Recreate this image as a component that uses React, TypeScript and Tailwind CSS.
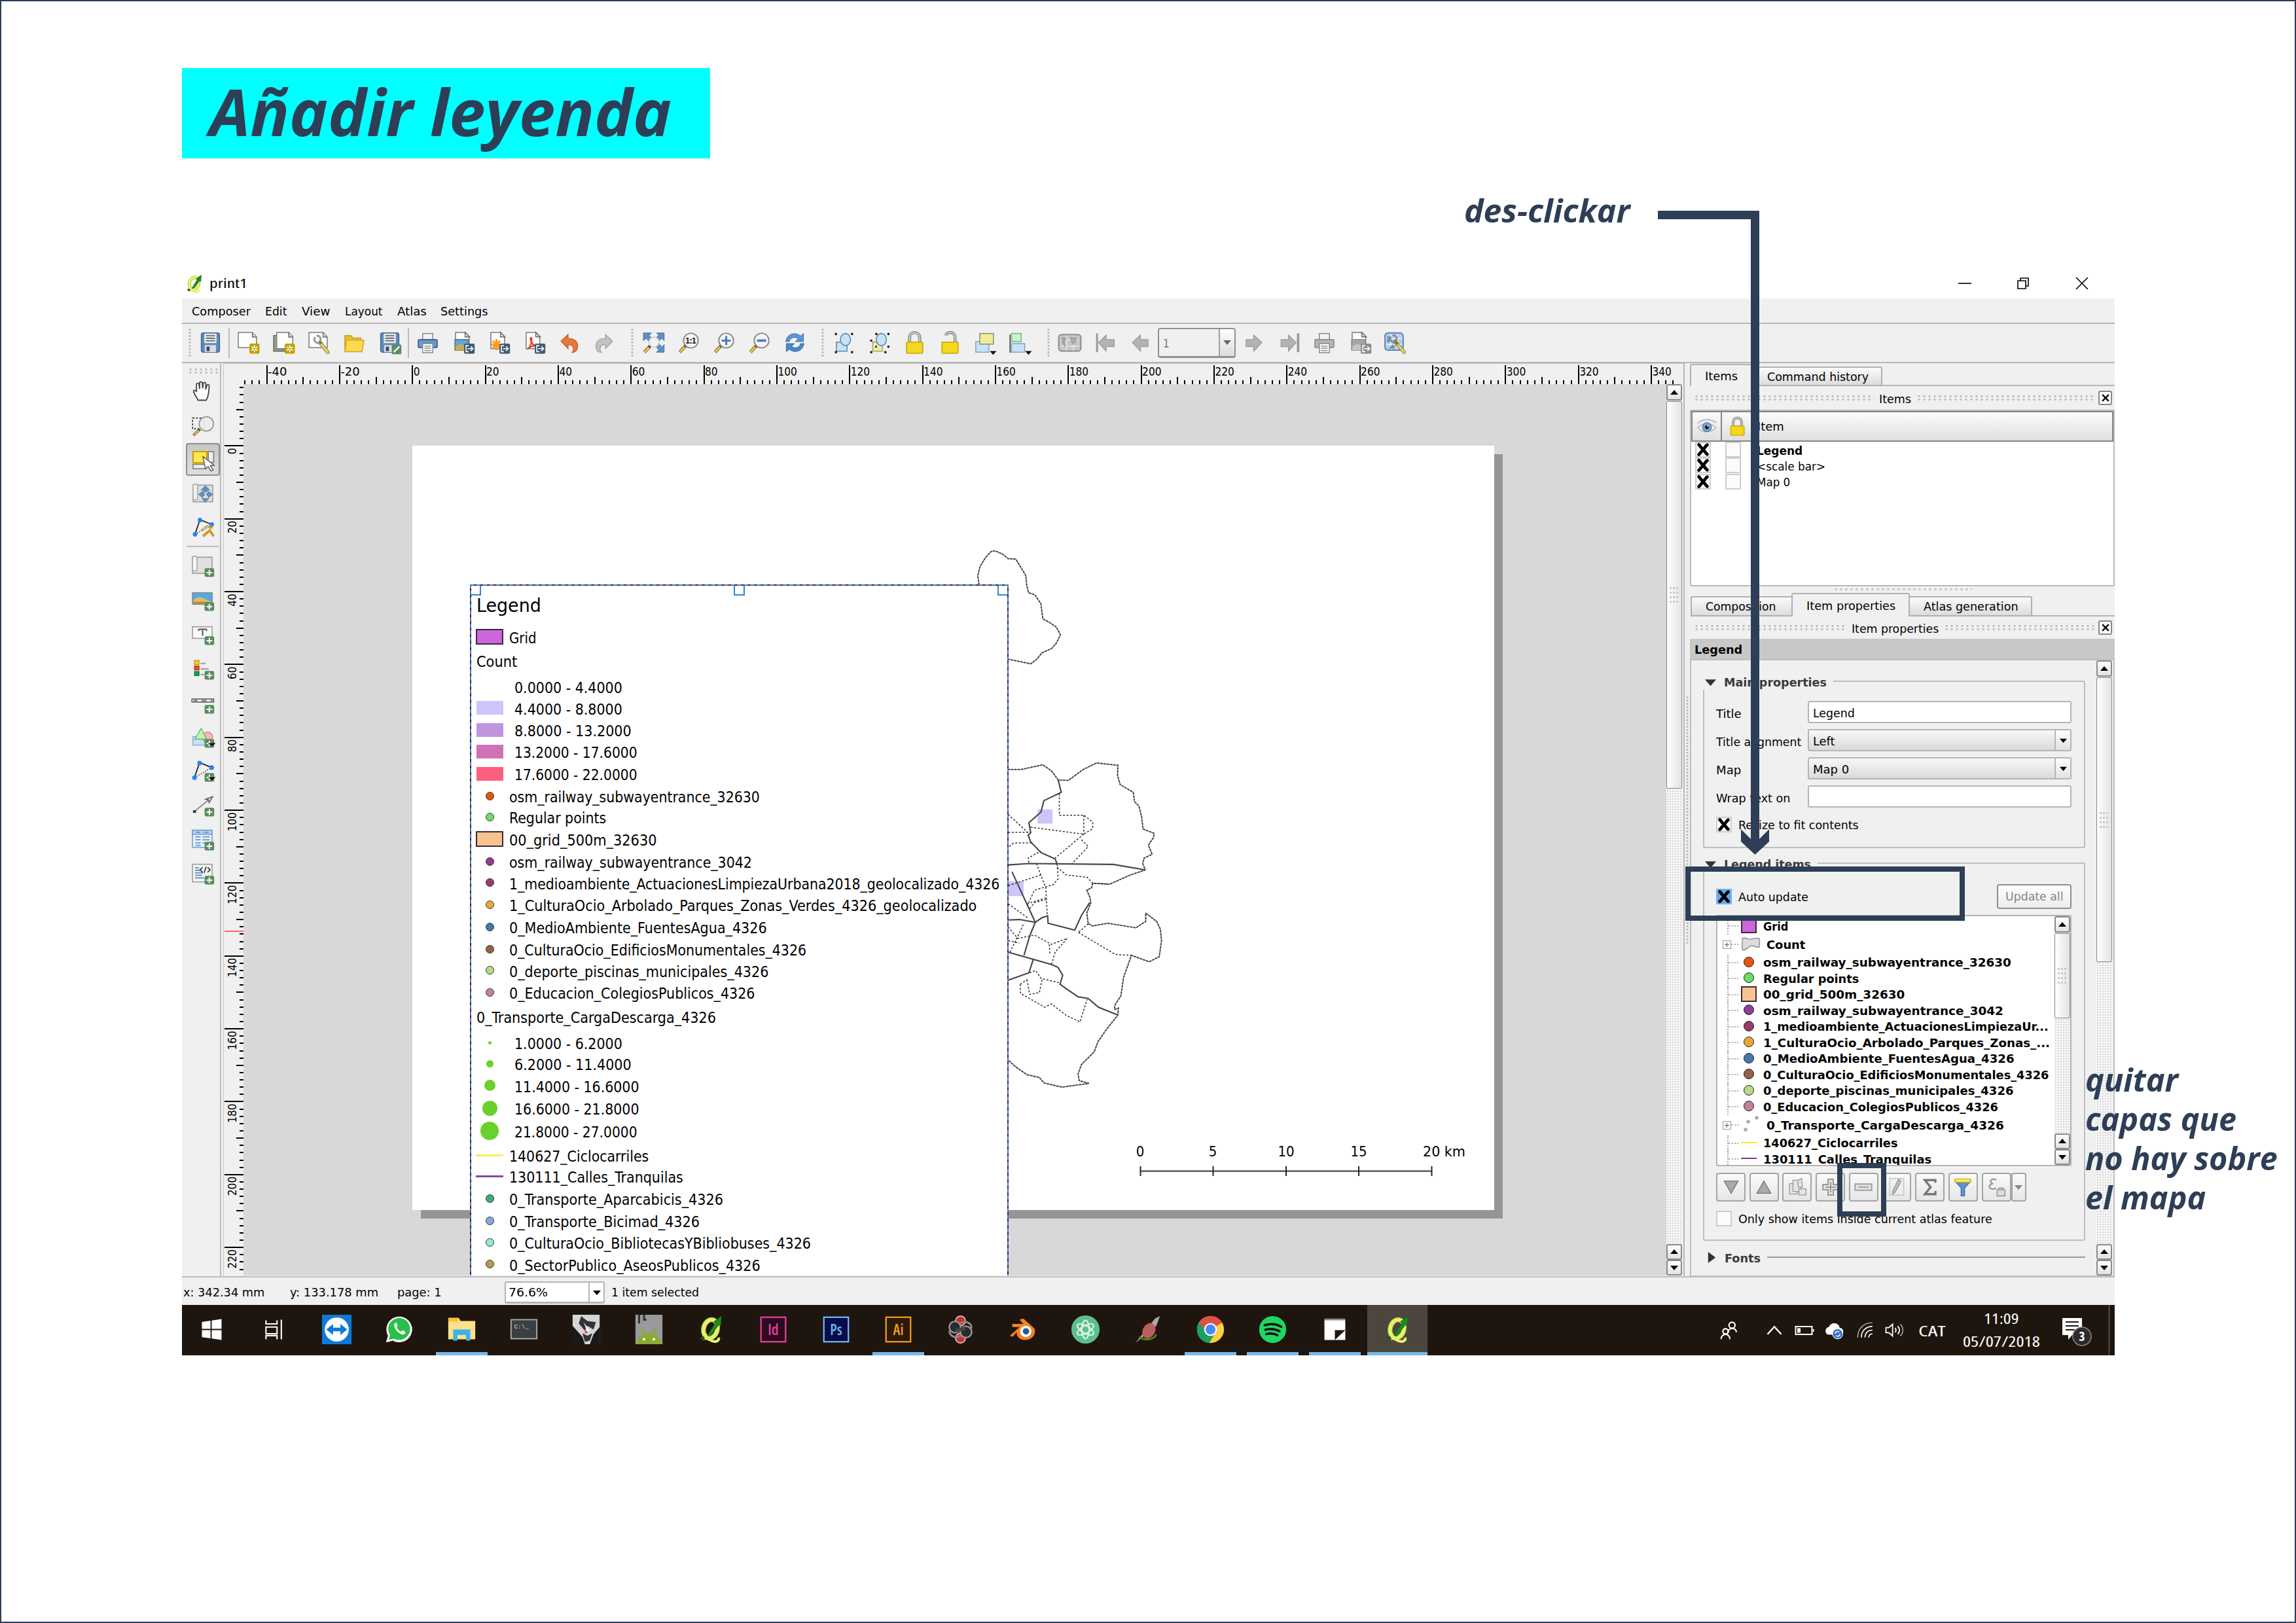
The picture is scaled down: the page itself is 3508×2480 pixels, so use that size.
import React, { useLayoutEffect, useRef } from "react";

const UI = "font-['DejaVu_Sans_Condensed','DejaVu_Sans',sans-serif] [font-stretch:condensed]";

/* Text squeezed or stretched to an exact advance width. */
function Fit({ w, children, className = "" }: { w: number; children: React.ReactNode; className?: string }) {
  const ref = useRef<HTMLSpanElement>(null);
  useLayoutEffect(() => {
    const el = ref.current;
    if (el && el.offsetWidth) el.style.transform = `scaleX(${w / el.offsetWidth})`;
  }, [w, children]);
  return (
    <span className={`inline-block shrink-0 whitespace-nowrap ${className}`} style={{ width: w }}>
      <span ref={ref} className="inline-block origin-left whitespace-nowrap">{children}</span>
    </span>
  );
}

/* ---------- icon parts ---------- */
const PlusBadge = () => (
  <g><rect x="14" y="14.5" width="9.5" height="8.5" rx="1.5" fill="#5b8c5f" /><path d="M18.75 16v5.6M15.9 18.8h5.7" stroke="#fff" strokeWidth="1.4" /></g>
);
const StarBadge = () => (
  <g><rect x="13" y="13" width="10" height="10" rx="1.5" fill="#c4a000" /><path d="M18 14.5v7M15 16.2l6 3.6M21 16.2l-6 3.6" stroke="#fff" strokeWidth="1.1" /><circle cx="18" cy="18" r="1" fill="#c4a000" /></g>
);
const ExportBadge = ({ c = "#415a73" }: { c?: string }) => (
  <g><rect x="13" y="13" width="10.5" height="10" rx="1.5" fill={c} /><path d="M17.5 15h-2.5v6h2.5M16.5 18h5M19.6 15.8l2.2 2.2-2.2 2.2" stroke="#fff" strokeWidth="1" fill="none" /></g>
);
const Sheet = () => <path d="M4.500 2h9.500l4 4v12H4.500z" fill="#fff" stroke="#7b7b7b" />;
const Fold = () => <path d="M14 1.800v4.500h4.500z" fill="#ddd" stroke="#666" strokeWidth=".9" />;
const Floppy = () => (
  <g>
    <rect x="3" y="2.500" width="18" height="19" rx="1.800" fill="#5f8bbd" stroke="#44658f" />
    <rect x="6" y="3" width="12" height="9.500" fill="#ececec" /><path d="M7.500 5.200h9M7.500 7.700h9M7.500 10.200h9" stroke="#555" strokeWidth="1" />
    <rect x="6.500" y="14.500" width="11" height="7" fill="#ddd" /><rect x="8.200" y="16" width="3" height="4.500" fill="#2c4b78" />
  </g>
);
const Lens = ({ children }: { children?: React.ReactNode }) => (
  <g>
    <path d="M9 15l-6 6.500" stroke="#333" strokeWidth="3" /><path d="M8 16.200l-5 5.300" stroke="#f6c33c" strokeWidth="2.200" />
    <circle cx="14" cy="10" r="7.300" fill="#f4f4f4" stroke="#8a8a8a" strokeWidth="1.200" />{children}
  </g>
);
const Printer = ({ a, b }: { a: string; b: string }) => (
  <g>
    <rect x="7" y="3" width="10" height="7" fill="#f2f2f2" stroke="#8c8c8c" /><rect x="2.500" y="9" width="19" height="8" rx="1.500" fill={a} stroke={b} />
    <rect x="7" y="13" width="10" height="9" fill="#fff" stroke="#8c8c8c" /><path d="M8.700 15.500h6.500M8.700 17.700h6.500M8.700 19.900h6.500" stroke="#888" />
  </g>
);
const Lock = ({ open }: { open?: boolean }) => (
  <g>
    <path d={open ? "M8 5c1-4.500 9-4 9 1.500V12" : "M7 12V7c0-6.500 10-6.500 10 0v5"} fill="none" stroke="#888" strokeWidth="3" />
    <path d={open ? "M8 5c1-4.500 9-4 9 1.500V12" : "M7 12V7c0-6.500 10-6.500 10 0v5"} fill="none" stroke="#ddd" strokeWidth="1" />
    <rect x="4" y="11.500" width="16" height="11" rx="1" fill="#f2d81e" stroke="#c9a200" />
  </g>
);
const PolyNodes = () => (
  <g>
    <path d="M4 19L9 4l12 5" fill="none" stroke="#222" strokeWidth="1.200" /><path d="M4 19L21 9" stroke="#333" strokeWidth=".8" strokeDasharray="1.200 1.200" />
    <circle cx="4" cy="19" r="2.300" fill="#2a7fff" /><circle cx="9" cy="4.500" r="2.300" fill="#2a7fff" /><circle cx="21" cy="9" r="2.300" fill="#2a7fff" />
  </g>
);
/* QGIS mark: a yellow ring with a tail, crossed by a green arrow. */
const Q = () => (
  <g>
    <ellipse cx="11.500" cy="11.500" rx="5.600" ry="7.600" transform="rotate(14 11.500 11.500)" fill="none" stroke="#9fae3a" strokeWidth="4" />
    <ellipse cx="11.500" cy="11.500" rx="5.600" ry="7.600" transform="rotate(14 11.500 11.500)" fill="none" stroke="#e6f26a" strokeWidth="3" />
    <path d="M6.500 19.500c3-2 5 3.200 9.500 2.200 1.300-.3 2-1.200 2.300-2.200" fill="none" stroke="#e6f26a" strokeWidth="2.200" strokeLinecap="round" />
    <path d="M9 17L15.500 6.500l-1.500-.7L20.500 1l-.7 8-1.500-.8L11 17.500z" fill="#1d8a1d" stroke="#0c5a0c" strokeWidth=".4" />
    <path d="M3 18.500l3-1 1 2.500-2 1z" fill="#1d5a1d" />
  </g>
);

const ICONS: Record<string, React.ReactNode> = {
  save: <Floppy />,
  newdoc: <><path d="M2 2h14l4 4v11H2z" fill="#fff" stroke="#7b7b7b" /><path d="M16 2v4.500h4" fill="#ddd" stroke="#666" /><StarBadge /></>,
  dup: <><path d="M2 5h4v13h11v2.500H2z" fill="#9b9b8d" stroke="#6d6d63" /><path d="M5 2h12l4 4v12H5z" fill="#fff" stroke="#7b7b7b" /><path d="M17 2v4.500h4" fill="#ddd" stroke="#666" /><StarBadge /></>,
  wrench: <><path d="M2 2h14l4 4v11H2z" fill="#fff" stroke="#7b7b7b" /><path d="M16 2v4.500h4" fill="#ddd" stroke="#666" /><path d="M13 12l7.500 9.500" stroke="#8a7430" strokeWidth="3.600" strokeLinecap="round" /><path d="M14.500 14l6 7.500" stroke="#e9cf6f" strokeWidth="2.400" strokeLinecap="round" /><path d="M8 6.500c-2 3 1 7 4.500 5.500M9.500 5.500c3-1 5 2 3.500 5" stroke="#999" strokeWidth="2" fill="none" /></>,
  folder: <><path d="M2.500 5h6l2 2.500h8V20h-16z" fill="#e3bd35" stroke="#c9a227" /><path d="M4.500 9.500h17l-2 11.500h-17z" fill="#fcd94f" stroke="#d3ab2c" /></>,
  saveas: <><Floppy /><rect x="14" y="14" width="9.500" height="9.500" rx="1" fill="#5b8c5f" /><path d="M16 21.500l5.500-5.500" stroke="#fff" strokeWidth="1.600" /></>,
  print: <Printer a="#6b96c7" b="#3d6491" />,
  image: <><Sheet /><Fold /><rect x="4" y="9" width="13.500" height="10.500" fill="#58a7e8" stroke="#6b6b6b" /><path d="M4.500 16l5-3 8 4v2.500h-13z" fill="#c9ae4c" /><ExportBadge /></>,
  svgexp: <><Sheet /><Fold /><path d="M10 8.500v11M4.800 14h10.500M6.200 10.200l7.600 7.600M13.800 10.200l-7.600 7.600" stroke="#ff9a1f" strokeWidth="2" /><ExportBadge /></>,
  pdf: <><Sheet /><Fold /><path d="M5.500 18.500c3-2 5-7 4.500-10.500-.2-1.500-1.800-1-1.300 1 .8 3.500 3 6 6.800 6.500-3-1-7 .5-10 3z" fill="none" stroke="#ee3a30" strokeWidth="1.400" /><ExportBadge /></>,
  undo: <path d="M4 10.500L11 4v4c6-.5 9.500 3 9.500 7.500 0 3.500-2 6-5.500 6.500 2.500-4 1.500-8-4-8v4z" fill="#e8783a" stroke="#c25a22" strokeWidth=".8" />,
  redo: <path d="M20 10.500L13 4v4c-6-.5-9.500 3-9.500 7.500 0 3.500 2 6 5.500 6.500-2.500-4-1.500-8 4-8v4z" fill="#c2c2c2" stroke="#9f9f9f" strokeWidth=".8" />,
  zfull: <><path d="M2 2.500h8l-2.300 2.300 2.500 2.900-3 2.700-2.500-2.700L2 10zM22.500 2.500V10l-2.300-2.300-2.900 2.500-2.700-3 2.700-2.500-2.200-2.200zM22.500 21.500H15l2.300-2.300-2.500-2.900 3-2.700 2.500 2.700 2.200-2.300z" fill="#5f8fc6" stroke="#3c659b" strokeWidth=".6" /><path d="M8.500 15.500L3 21.500" stroke="#333" strokeWidth="3" /><path d="M7.500 16.700L3 21.500" stroke="#f6c33c" strokeWidth="2.200" /><circle cx="12.500" cy="11.500" r="5" fill="#f4f4f4" fillOpacity=".8" stroke="#ccc" /></>,
  z11: <Lens><text x="14" y="13" textAnchor="middle" fontFamily="DejaVu Sans" fontWeight="bold" fontSize="7.500" fill="#222" textLength="11">1:1</text></Lens>,
  zin: <Lens><path d="M14 5.500v9M9.500 10h9" stroke="#4b7dbb" strokeWidth="2" /></Lens>,
  zout: <Lens><path d="M9.500 10h9" stroke="#4b7dbb" strokeWidth="2.400" /></Lens>,
  refresh: <><path d="M3 11C4 3 13 1 17.500 5.500L20.500 3v8h-8l2.700-2.700C12.500 5.800 7.500 6.500 6.500 11z" fill="#5b95d6" stroke="#3469a6" strokeWidth=".6" /><path d="M21 13c-1 8-10 10-14.500 5.500L3.500 21v-8h8l-2.700 2.700C11.500 18.200 16.500 17.500 17.500 13z" fill="#4a86ca" stroke="#3469a6" strokeWidth=".6" /></>,
  sel: <><rect x="4.500" y="11.500" width="10.500" height="9" fill="#c7e3f8" stroke="#5b87ab" /><ellipse cx="13.500" cy="9" rx="5" ry="6" fill="#c7e3f8" stroke="#5b87ab" /><path d="M3 2.500h2v2H3zM19 2.500h2v2h-2zM3 20.500h2v2H3zM19 20.500h2v2h-2z" fill="#111" /></>,
  group: <><rect x="5.500" y="11.500" width="9.500" height="9" fill="#f0ee9c" stroke="#a8a667" /><ellipse cx="14" cy="9" rx="5" ry="6" fill="#c7e3f8" stroke="#5b87ab" /><path d="M8 2.500h2v2H8zM20 2.500h2v2h-2zM3 9h2v2H3zM20 15h2v2h-2zM3 20.500h2v2H3zM17 20.500h2v2h-2zM8 15h1.500v2H8z" fill="#111" /></>,
  lock: <Lock />,
  unlock: <Lock open />,
  raise: <><rect x="2.500" y="11" width="13" height="10.500" fill="#c7e3f8" stroke="#7fa6c4" /><rect x="6.500" y="3" width="13.500" height="10.500" fill="#f0ee9c" stroke="#8d8d6c" /><path d="M16.500 20.500h6.500l-3.300 3.500z" fill="#000" /></>,
  align: <><path d="M1.500 4v18" stroke="#333" /><rect x="3" y="3" width="9.500" height="8" fill="#c9f7cb" stroke="#7cb57f" /><rect x="3" y="13" width="13" height="8.500" fill="#c7e3f8" stroke="#7fa6c4" /><path d="M16.500 20.500h6.500l-3.300 3.500z" fill="#000" /></>,
  atlas: <><rect x="1" y="4" width="22" height="16.500" rx="3" fill="#c6c6c6" stroke="#8d8d8d" strokeWidth="1.300" /><path d="M3 9.500h18M3 15.500h18M8.500 5v15M15.500 5v15" stroke="#ececec" /><path d="M4 7c3-2 6 1 4 3s1 4 0 6-3-3-4-5zM12 7c3-2 6 0 7 1s-2 4-3 6-3-3-4-7z" fill="#8b8b8b" fillOpacity=".6" /></>,
  first: <><path d="M4 3v18.500" stroke="#999" strokeWidth="2" /><path d="M5.500 12L13 4.500V9h8v7h-8v4.500z" fill="#b3b3b3" stroke="#989898" strokeWidth=".8" /></>,
  prev: <path d="M4 12l8-7.500V9h7.500v7H12v4.500z" fill="#b3b3b3" stroke="#989898" strokeWidth=".8" />,
  next: <path d="M20 12l-8-7.500V9H4.500v7H12v4.500z" fill="#b3b3b3" stroke="#989898" strokeWidth=".8" />,
  last: <><path d="M21 3v18.500" stroke="#999" strokeWidth="2.400" /><path d="M19 12l-7.500-7.500V9H4v7h7.500v4.500z" fill="#b3b3b3" stroke="#989898" strokeWidth=".8" /></>,
  gprint: <Printer a="#b5b5b5" b="#8c8c8c" />,
  gexport: <><Sheet /><Fold /><rect x="4" y="9" width="13.500" height="10.500" fill="#a5a5a5" stroke="#8b8b8b" /><path d="M4.500 16l5-3 8 4v2.500h-13z" fill="#c4c4c4" /><ExportBadge c="#8d8d8d" /></>,
  gset: <><rect x="2" y="2.500" width="18" height="17" rx="3" fill="#b4cdea" stroke="#5f83b3" strokeWidth="1.300" /><path d="M3 8h16M3 14h16M8 3.500v15M14 3.500v15" stroke="#edf4fb" /><path d="M4 6c3-1 4 1 3 4s-2 3-3 1zM9 14c2 0 4 2 2 4H6z" fill="#6f93c2" /><path d="M12 11l9 10.500" stroke="#8a7430" strokeWidth="3.400" strokeLinecap="round" /><path d="M15 14.500l6 7" stroke="#e9cf6f" strokeWidth="2.200" strokeLinecap="round" /><path d="M8 6c-2 3 1 7 4.500 5.500M9.500 5c3-1 5 2 3.500 5" stroke="#8a8a8a" strokeWidth="1.800" fill="none" /></>,
  hand: <path d="M7 21c-1-3-4-6-4.500-9 0-1.500 2-1.500 3 .5V5c0-1.600 2.300-1.600 2.600 0l.6 4.500V3.500c0-1.600 2.500-1.600 2.700 0l.4 5.500.6-5c.2-1.500 2.500-1.500 2.500.2V10l1.200-4c.4-1.400 2.500-1 2.300.6-.4 5-.2 10-3 14.400z" fill="#fff" stroke="#444" strokeWidth="1.200" />,
  zbox: <><rect x="1.500" y="4.500" width="12" height="11" fill="none" stroke="#222" strokeDasharray="2 1.500" /><path d="M9 16l-6.500 6" stroke="#444" strokeWidth="2.800" /><path d="M8 17l-5 4.600" stroke="#f0b436" strokeWidth="2" /><circle cx="15.500" cy="10.500" r="7.300" fill="#ececec" fillOpacity=".9" stroke="#999" strokeWidth="1.200" /></>,
  select: <><rect x="2" y="4" width="14" height="11.500" fill="#fce94f" stroke="#c4a000" strokeWidth="1.300" /><path d="M17.500 4h5.500v11h-5.500zM2 17h13.500v4.500H2z" fill="#eee" stroke="#777" /><path d="M12 9l11.500 9-4 .5 3 4.500-2.500.8-2.500-4.500-3 2z" fill="#fff" stroke="#555" strokeWidth=".9" /></>,
  move: <><rect x="2" y="3.500" width="20" height="17" fill="#ddd" stroke="#999" /><rect x="2" y="2.500" width="4.500" height="16" rx="1.500" fill="#f0f0f0" stroke="#aaa" /><path d="M14.500 4l4.500 4.500h-2.700v2h-3.600v-2H10zM14.500 21l-3.500-3.800h7zM7.500 13l4.500-3.500v2.300h1.500v2.400H12v2.300zM22 13l-4.500-3.500v2.300H16v2.400h1.500v2.300z" fill="#5f8fc6" stroke="#3c659b" strokeWidth=".4" /></>,
  nodes: <><PolyNodes /><path d="M11 15l5-4 6 1M12 21l7-6 4 6" stroke="#d39a20" strokeWidth="2.600" fill="none" /><path d="M12 14l6-3" stroke="#bbb" strokeWidth="2.400" /></>,
  amap: <><rect x="2" y="3.500" width="19.500" height="16" fill="#e0e0e0" stroke="#999" /><rect x="2" y="2.500" width="4.500" height="14.500" rx="1.500" fill="#f6f6f6" stroke="#aaa" /><PlusBadge /></>,
  aimg: <><rect x="2" y="5" width="19.500" height="11.500" fill="#58a7e8" stroke="#888" /><path d="M3 12c5-5 8-2 18 2v2H3z" fill="#d8bd6a" /><path d="M3 14h18v2.300H3z" fill="#b1902c" /><PlusBadge /></>,
  alabel: <><rect x="2" y="5" width="19.500" height="11.500" fill="#f8f8f8" stroke="#999" /><path d="M8 7.500h8M12 7.500v6.500M8 7.500v1.500M16 7.500v1.500" stroke="#555" strokeWidth="1.300" /><PlusBadge /></>,
  alegend: <><rect x="4" y="4" width="4.500" height="4" fill="#ffd21e" stroke="#b78a00" strokeWidth=".7" /><rect x="4" y="9.500" width="4.500" height="4" fill="#ff4a16" stroke="#a52800" strokeWidth=".7" /><rect x="4" y="15" width="4.500" height="4" fill="#00a65a" stroke="#006a36" strokeWidth=".7" /><path d="M10 7h5M10 12.500h8M10 18h3.500" stroke="#999" strokeWidth="1.300" /><PlusBadge /></>,
  ascale: <><rect x="1.500" y="8.500" width="21.500" height="3" fill="#fff" stroke="#555" /><path d="M3 10h4M11 10h5M20 10h2" stroke="#999" strokeWidth="2" /><PlusBadge /></>,
  ashape: <><rect x="2.500" y="12" width="13" height="8.500" fill="#c7e3f8" stroke="#8ab0cd" /><ellipse cx="17" cy="13" rx="5" ry="5.500" fill="#ffb4b4" stroke="#d98a8a" /><path d="M10.500 4L16 14.500H4.500z" fill="#bff3bd" stroke="#78b878" /><PlusBadge /><path d="M17.500 18.500H25l-3.700 3z" fill="#000" /></>,
  anode: <><PolyNodes /><PlusBadge /><path d="M17.500 18.500H25l-3.700 3z" fill="#000" /></>,
  aarrow: <><path d="M4 18L20 5" stroke="#888" strokeWidth="1.200" /><rect x="2.500" y="17" width="3" height="2.500" fill="#333" /><path d="M15 6l7-2.500-3.500 6-.5-2.800z" fill="#ddd" stroke="#555" strokeWidth=".9" /><PlusBadge /></>,
  atable: <><rect x="2" y="3" width="19.500" height="17" fill="#e6f0fa" stroke="#6f9dce" /><rect x="2" y="3" width="19.500" height="4" fill="#b7d4ef" stroke="#6f9dce" /><path d="M5.500 5h4M13 5h5M5 9.500h5M12 9.500h7M5 12.500h5M12 12.500h7M5 15.500h5M12 15.500h3M5 18h5" stroke="#5b86b8" /><PlusBadge /></>,
  ahtml: <><rect x="2" y="3" width="19.500" height="17.500" fill="#f4f4f4" stroke="#999" /><path d="M4.500 6.500h4M4.500 9h5M4.500 11.500h8M4.500 14h7M4.500 16.500h9" stroke="#6b97cc" strokeWidth="1.300" /><path d="M12 6l-2.500 2.500L12 11M17 6l2.500 2.500L17 11M15.500 5.500l-2 6" stroke="#333" fill="none" strokeWidth="1.100" /><PlusBadge /></>,
};

function Icon({ n, s = "size-[37px]" }: { n: string; s?: string }) {
  return <svg viewBox="0 0 24 24" className={`${s} shrink-0 overflow-visible`}>{ICONS[n]}</svg>;
}

const TOOLBAR = [
  "h0", "save", "|", "newdoc", "dup", "wrench", "folder", "saveas", "|", "print", "image", "svgexp", "pdf", "undo", "redo",
  "h", "zfull", "z11", "zin", "zout", "refresh", "h", "sel", "group", "lock", "unlock", "raise", "align", "h", "atlas", "first", "prev",
  "combo", "next", "last", "gprint", "gexport", "gset",
];

const DOTS = "bg-[radial-gradient(circle,#bdbdbd_1.4px,transparent_1.9px)] bg-[length:8px_5px]";

function Toolbar() {
  return (
    <div className="flex h-[60px] items-center border-b-2 border-[#b6b6b6] bg-[#f0f0f0] pb-[1px]">
      {TOOLBAR.map((t, i) => {
        if (t === "h0") return <div key={i} className={`ml-[8px] h-[46px] w-[8px] ${DOTS}`} />;
        if (t === "h") return <div key={i} className={`ml-[12px] mr-[1px] h-[46px] w-[8px] ${DOTS}`} />;
        if (t === "|") return <div key={i} className="mx-[1px] h-[46px] w-[2px] bg-[#bbb]" />;
        if (t === "combo")
          return (
            <div key={i} className="flex h-[46px] w-[119px] overflow-hidden rounded-[4px] border-2 border-b-[3px] border-[#909090] bg-[#f0f0f0]">
              <div className="flex flex-1 items-center pl-[6px] pt-[4px] text-[17px] text-[#8a7070]">1</div>
              <div className="flex w-[24px] items-center justify-center border-l-2 border-[#a0a0a0] bg-linear-to-b from-white to-[#dcdcdc]">
                <Tri dir="down" c="#666" />
              </div>
            </div>
          );
        return <div key={i} className="flex w-[54px] shrink-0 justify-center"><Icon n={t} /></div>;
      })}
    </div>
  );
}

function Tri({ dir, c = "#000", s = "size-[12px]" }: { dir: "up" | "down" | "right"; c?: string; s?: string }) {
  const d = dir === "up" ? "M0 9L6 2l6 7z" : dir === "down" ? "M0 3l6 7 6-7z" : "M2 0l8 6-8 6z";
  return <svg viewBox="0 0 12 12" className={s}><path d={d} fill={c} /></svg>;
}

const TOOLS1 = ["hand", "zbox", "select", "move", "nodes"];
const TOOLS2 = ["amap", "aimg", "alabel", "alegend", "ascale", "ashape", "anode", "aarrow", "atable", "ahtml"];

function ToolColumn() {
  return (
    <div className="flex w-[60px] shrink-0 flex-col items-center border-r-2 border-[#bbb] pl-[5px]">
      <div className={`mt-[7px] h-[10px] w-[46px] shrink-0 ${DOTS}`} />
      {TOOLS1.map((t) => (
        <div key={t} className={t === "select"
          ? "flex h-[50px] w-[52px] my-[1px] items-center justify-center rounded-[4px] border-2 border-[#8f8f8f] bg-linear-to-b from-[#c8c8c8] to-[#dedede]"
          : "flex h-[52px] items-center justify-center"}>
          <Icon n={t} s="size-[36px]" />
        </div>
      ))}
      <div className="my-[2px] h-[2px] w-[48px] bg-[#bbb]" />
      {TOOLS2.map((t) => <div key={t} className="flex h-[52.300px] items-center justify-center"><Icon n={t} s="size-[37px]" /></div>)}
    </div>
  );
}

/* Rulers: one unit is one millimetre on the sheet. */
const MM = 5.567;
function HRuler() {
  const ticks = [];
  for (let v = -46; v <= 348; v += 2) {
    const x = 630.2 + v * MM - 341;
    if (x > 2226) break;
    const major = v % 20 === 0;
    const y = major ? 3 : v % 10 === 0 ? 21 : 26;
    ticks.push(<rect key={v} x={Math.round(x) - 1} y={y} width="2" height={32 - y} fill="#000" />);
    if (major) ticks.push(<text key={`t${v}`} x={x + 1.500} y="18.500" fontSize="18" textLength={String(v).length * 9.8} lengthAdjust="spacingAndGlyphs">{v}</text>);
  }
  return <svg className={`h-[32px] w-full shrink-0 ${UI}`} viewBox="0 0 2232 32" preserveAspectRatio="xMinYMin slice">{ticks}</svg>;
}
function VRuler() {
  const ticks = [];
  for (let v = -16; v <= 226; v += 2) {
    const y = 681.400 + v * MM - 587;
    if (y > 1360) break;
    const major = v % 20 === 0;
    const x = major ? 2 : v % 10 === 0 ? 20 : 25;
    ticks.push(<rect key={v} x={x} y={Math.round(y) - 1} width={31 - x} height="2" fill="#000" />);
    if (major) ticks.push(<text key={`t${v}`} transform={`translate(19.500 ${y + 3}) rotate(-90)`} textAnchor="end" fontSize="18" textLength={String(v).length * 9.8} lengthAdjust="spacingAndGlyphs">{v}</text>);
  }
  ticks.push(<rect key="cursor" x="2" y="835" width="29" height="2" fill="#f66" />);
  return <svg className={`h-full w-[31px] shrink-0 ${UI}`} viewBox="0 0 31 1362">{ticks}</svg>;
}

const SBTN = "flex w-full shrink-0 items-center justify-center rounded-[3px] border-2 border-[#8a8a8a] bg-linear-to-b from-white to-[#e2e2e2]";
function VScroll({ thumb }: { thumb: number }) {
  return (
    <div className="flex w-[24px] shrink-0 flex-col bg-[radial-gradient(circle,#d4d4d4_1px,#f6f6f6_1.400px)] bg-[length:4px_4px]">
      <div className={`${SBTN} h-[25px]`}><Tri dir="up" /></div>
      <div className="mt-[1px] flex w-full shrink-0 items-center justify-center rounded-[2px] border border-[#8a8a8a] bg-linear-to-r from-white to-[#e4e4e4]" style={{ height: thumb }}>
        <div className="h-[28px] w-[16px] bg-[radial-gradient(circle,#bdbdbd_1.200px,transparent_1.600px)] bg-[length:5px_7px]" />
      </div>
      <div className="flex-1" />
      <div className={`${SBTN} h-[24px]`}><Tri dir="up" /></div>
      <div className={`${SBTN} h-[24px]`}><Tri dir="down" /></div>
    </div>
  );
}

/* ---------- composer canvas ---------- */
type Row = { b: number; x: number; e: number; t: string; k?: string; c?: string; d?: number };
const LEGEND: Row[] = [
  { b: 981, x: 779, e: 820, t: "Grid", k: "box", c: "#cc66dc" },
  { b: 1017, x: 728, e: 790, t: "Count" },
  { b: 1057, x: 786, e: 951, t: "0.0000 - 4.4000" },
  { b: 1090.400, x: 786, e: 951, t: "4.4000 - 8.8000", k: "sw", c: "#cdc4f9" },
  { b: 1123.600, x: 786, e: 965, t: "8.8000 - 13.2000", k: "sw", c: "#bf96de" },
  { b: 1157, x: 786, e: 974, t: "13.2000 - 17.6000", k: "sw", c: "#cf72b6" },
  { b: 1190.700, x: 786, e: 974, t: "17.6000 - 22.0000", k: "sw", c: "#ff5e80" },
  { b: 1224.600, x: 778, e: 1161, t: "osm_railway_subwayentrance_32630", k: "dot", c: "#e8540a" },
  { b: 1257, x: 778, e: 926, t: "Regular points", k: "dot", c: "#66e066" },
  { b: 1290.700, x: 778, e: 1004, t: "00_grid_500m_32630", k: "box", c: "#f9c391" },
  { b: 1324.600, x: 778, e: 1149, t: "osm_railway_subwayentrance_3042", k: "dot", c: "#933a94" },
  { b: 1357.500, x: 778, e: 1527, t: "1_medioambiente_ActuacionesLimpiezaUrbana2018_geolocalizado_4326", k: "dot", c: "#9a3a6c" },
  { b: 1391, x: 778, e: 1492, t: "1_CulturaOcio_Arbolado_Parques_Zonas_Verdes_4326_geolocalizado", k: "dot", c: "#e8a838" },
  { b: 1425, x: 778, e: 1172, t: "0_MedioAmbiente_FuentesAgua_4326", k: "dot", c: "#4278ae" },
  { b: 1459, x: 778, e: 1232, t: "0_CulturaOcio_EdificiosMonumentales_4326", k: "dot", c: "#96604a" },
  { b: 1491.500, x: 778, e: 1174, t: "0_deporte_piscinas_municipales_4326", k: "dot", c: "#b4dc86" },
  { b: 1525, x: 778, e: 1154, t: "0_Educacion_ColegiosPublicos_4326", k: "dot", c: "#c0829c" },
  { b: 1562, x: 728, e: 1094, t: "0_Transporte_CargaDescarga_4326" },
  { b: 1602, x: 786, e: 951, t: "1.0000 - 6.2000", k: "g", d: 5 },
  { b: 1634, x: 786, e: 965, t: "6.2000 - 11.4000", k: "g", d: 11 },
  { b: 1667.500, x: 786, e: 977, t: "11.4000 - 16.6000", k: "g", d: 17 },
  { b: 1702, x: 786, e: 977, t: "16.6000 - 21.8000", k: "g", d: 23 },
  { b: 1736.400, x: 786, e: 974, t: "21.8000 - 27.0000", k: "g", d: 28 },
  { b: 1774, x: 778, e: 991, t: "140627_Ciclocarriles", k: "line", c: "#fdee54" },
  { b: 1806, x: 778, e: 1044, t: "130111_Calles_Tranquilas", k: "line", c: "#8446ac" },
  { b: 1840, x: 778, e: 1105, t: "0_Transporte_Aparcabicis_4326", k: "dot", c: "#3cae78" },
  { b: 1874, x: 778, e: 1069, t: "0_Transporte_Bicimad_4326", k: "dot", c: "#86a8de" },
  { b: 1907, x: 778, e: 1239, t: "0_CulturaOcio_BibliotecasYBibliobuses_4326", k: "dot", c: "#8eeed2" },
  { b: 1940.500, x: 778, e: 1162, t: "0_SectorPublico_AseosPublicos_4326", k: "dot", c: "#b89a4c" },
];

function Symbol({ r }: { r: Row }) {
  if (r.k === "box") return <div className="h-[24px] w-[42px] border-2 border-[#3a2a3a]" style={{ backgroundColor: r.c }} />;
  if (r.k === "sw") return <div className="h-[21px] w-[41px]" style={{ backgroundColor: r.c }} />;
  if (r.k === "dot") return <div className="size-[13px] rounded-full border-[1.500px] border-[#333]" style={{ backgroundColor: r.c }} />;
  if (r.k === "g") return <div className="rounded-full bg-[#6bd02c]" style={{ width: r.d, height: r.d }} />;
  if (r.k === "line") return <div className="h-[2.500px] w-[42px]" style={{ backgroundColor: r.c }} />;
  return null;
}

function Legend() {
  return (
    <div className="absolute left-[346px] top-[306px] h-[1070px] w-[823px] border-2 border-dashed border-[#2f86c6] bg-[#5a0f3c]">
      <div className="relative flex h-full w-full flex-col bg-white">
        <div className="absolute left-0 top-0 size-[15px] border-b-2 border-r-2 border-[#2f86c6]" />
        <div className="absolute left-[401px] top-0 h-[15px] w-[17px] border-x-2 border-b-2 border-[#2f86c6]" />
        <div className="absolute right-0 top-0 size-[15px] border-b-2 border-l-2 border-[#2f86c6]" />
        <div className="flex h-[46.500px] shrink-0 items-end pb-[3px] pl-[8px] text-[29px] leading-[28px]"><Fit w={99}>Legend</Fit></div>
        {LEGEND.map((r, i) => (
          <div key={r.t} className="flex shrink-0 items-end" style={{ height: r.b - (i ? LEGEND[i - 1].b : 937) }}>
            <div className="flex h-[22px] items-center text-[22.500px] leading-[22px]">
              {r.x > 730 && <div className="relative -top-[2px] ml-[7px] flex w-[42px] shrink-0 items-center justify-center"><Symbol r={r} /></div>}
              <Fit w={r.e - r.x} className={r.x > 780 ? "ml-[17px]" : r.x > 730 ? "ml-[9px]" : "ml-[8px]"}>{r.t}</Fit>
            </div>
          </div>
        ))}
      </div>
    </div>
  );
}

const OUTLINE = [
  "M97 104L94 85 100 65 115 45 130 32 140 31 160 38 175 48 195 49 205 62 222 85 224 105 229 122 246 127 262 146 267 179 285 187 303 197 314 214 303 232 290 244 265 253 250 268 235 277 205 272 175 267",
  "M175 507L210 507 267 497 290 510 308 530 335 531 375 507 410 493 467 498 466 520 473 540 508 557 511 577 523 587 530 610 534 637 563 646 562 655 548 672 558 692 537 700 533 712 540 726",
  "M540 726L500 737 445 757 400 755 397 765 384 770 392 785 395 797 384 820 388 843 400 848 440 842 515 852 541 838 541 820 570 838 580 855 583 880 577 915 550 926 503 912 482 960 475 1000 459 1020 458 1030 468 1027 467 1042 435 1075 414 1100 404 1122 370 1150 361 1170 364 1185 390 1191 318 1199 270 1190 258 1178 225 1172 195 1155 175 1140",
];
const THICK = [
  "M308 530L316 557 270 575 262 600 230 623 235 645 228 650 235 665 262 688 300 702 305 713",
  "M175 715L230 712 455 714 540 726",
  "M185 730L247 840 265 830 280 826 281 842 352 857 370 825 392 797",
  "M247 840L232 870 217 912M175 835L205 834 247 840",
  "M175 905L290 932 307 938 320 955 313 975 360 1002 388 1006 415 1025 467 1042",
  "M242 920L230 950 175 966",
];
const DOTTED = [
  "M311 560V607H377L400 622 400 636 376 648 300 640 230 632M376 607V648",
  "M175 605L228 645M175 644H235M178 675L190 667H240",
  "M376 648L300 700M370 660L388 675 345 712M230 710L228 700 262 685",
  "M250 712L275 765 279 826M305 713L308 745 295 758 245 770 225 805M305 720L330 737 385 742 400 755 445 757",
  "M175 760L262 737M225 800L275 787M175 800L230 832M232 810L245 797 278 790",
  "M175 850L200 875 245 868 290 888 332 875 300 905 290 932M284 888L286 910M215 845L180 905M175 880L205 885",
  "M362 862L460 910 503 912M388 843L362 862",
  "M232 950L248 945 262 962 312 972M207 975L208 995 272 1025 290 1018 330 1043 366 1057 385 1008",
  "M225 965L232 997 258 993 265 965M207 975L225 965",
];

function Canvas() {
  return (
    <div className="relative h-[1362px] w-[2174px] shrink-0 overflow-hidden bg-[#d8d8d8]">
      <div className="absolute left-[258px] top-[94px] h-[1168px] w-[1653px] bg-white shadow-[13px_13px_0_#959595]" />
      <svg className="absolute left-[1068px] top-[233px] h-[1100px] w-[900px]" viewBox="0 0 1568 1568" preserveAspectRatio="none">
        <rect x="253" y="594" width="40" height="31" fill="#cdc4f9" /><rect x="170" y="751" width="46" height="32" fill="#cdc4f9" />
        {OUTLINE.map((d) => (
          <g key={d} fill="none">
            <path d={d} stroke="#777" strokeWidth="1.600" vectorEffect="non-scaling-stroke" />
            <path d={d} stroke="#333" strokeWidth="1.900" strokeDasharray="2 3" vectorEffect="non-scaling-stroke" />
          </g>
        ))}
        {THICK.map((d) => <path key={d} d={d} fill="none" stroke="#444" strokeWidth="2.100" vectorEffect="non-scaling-stroke" />)}
        {DOTTED.map((d) => <path key={d} d={d} fill="none" stroke="#333" strokeWidth="1.500" strokeDasharray="3 2.500" vectorEffect="non-scaling-stroke" />)}
      </svg>
      <svg className={`absolute left-[1358px] top-[1153px] h-[70px] w-[540px] ${UI}`} viewBox="1730 1740 540 70">
        <path d="M1742 1789.500H2188" stroke="#5a5a5a" strokeWidth="2.400" />
        {[1742.500, 1853.500, 1965, 2076, 2187.500].map((x) => <path key={x} d={`M${x} 1782v15`} stroke="#222" strokeWidth="2" />)}
        <g fontSize="22" textAnchor="middle">
          <text x="1742" y="1767">0</text><text x="1853" y="1767">5</text><text x="1965" y="1767">10</text><text x="2076" y="1767">15</text>
        </g>
        <text x="2174" y="1767" fontSize="22" textLength="65" lengthAdjust="spacingAndGlyphs">20 km</text>
      </svg>
      <Legend />
    </div>
  );
}

/* ---------- right docks ---------- */
const CloseBtn = () => (
  <div className="ml-[4px] mr-[4px] flex h-[22px] w-[21px] items-center justify-center rounded-[3px] border-2 border-[#888] bg-white">
    <svg viewBox="0 0 10 10" className="size-[12px]"><path d="M1 1l8 8M9 1L1 9" stroke="#000" strokeWidth="2" /></svg>
  </div>
);
function DockTitle({ t, w, h }: { t: string; w: number; h: string }) {
  return (
    <div className={`flex shrink-0 items-center ${h}`}>
      <div className={`ml-[6px] h-[10px] flex-1 ${DOTS}`} />
      <Fit w={w} className="mx-[8px] pt-[4px]">{t}</Fit>
      <div className={`h-[10px] flex-1 ${DOTS}`} />
      <CloseBtn />
    </div>
  );
}
function Check({ on, blue }: { on?: boolean; blue?: boolean }) {
  return (
    <div className={`flex h-[24px] w-[24px] shrink-0 items-center justify-center border-2 ${blue ? "border-[#7fb4e6] bg-[#58aaf8]" : "border-[#cdcdcd] bg-[#fbfbfb]"}`}>
      {on && <svg viewBox="0 0 12 12" className="size-[20px] shrink-0"><path d="M2.200 1.500c1.300 1 1.800 2.800 3.800 4.500 1.500 1.500 2.300 3 3.800 4.300M9.800 1.700C8.500 2.500 7.500 4.500 6 6 4.500 7.500 3.500 9.300 2.200 10.500" stroke="#000" strokeWidth="2.900" strokeLinecap="round" fill="none" /></svg>}
    </div>
  );
}
const TAB = "flex shrink-0 items-center justify-center border-[#b0b0b0] pt-[1px]";
const OFF = "bg-linear-to-b from-[#fbfbfb] to-[#dcdcdc]";

function ItemsDock() {
  return (
    <>
      <div className="flex h-[35px] shrink-0 items-end">
        <div className={`${TAB} h-[34px] w-[98px] rounded-t-[3px] border-l-2 border-t-2 bg-[#f0f0f0] pr-[4px]`}><Fit w={50}>Items</Fit></div>
        <div className={`${TAB} ${OFF} h-[30px] w-[196px] rounded-tr-[3px] border-b-2 border-r-2 border-t-2`}><Fit w={155}>Command history</Fit></div>
        <div className="flex-1 border-b-2 border-[#b6b6b6]" />
      </div>
      <DockTitle t="Items" w={49} h="h-[36px]" />
      <div className="h-[270px] shrink-0 rounded-[2px] border-2 border-[#b8b8b8] bg-white">
        <div className="flex h-[47px] border-2 border-[#858585] bg-linear-to-b from-[#fbfbfb] to-[#dfdfdf]">
          <div className="flex w-[45px] items-center justify-center border-r-2 border-[#858585]">
            <svg viewBox="0 0 24 24" className="size-[30px]">
              <path d="M1 8c5-6 16-6 22-1" stroke="#bbb" strokeWidth="1.500" fill="none" /><path d="M1 13c5-6 16-6 22 0-6 7-17 7-22 0z" fill="#f4f4f4" stroke="#b5b5b5" strokeWidth="1.200" />
              <circle cx="12" cy="12.500" r="5.500" fill="#7ba4d4" stroke="#5b82b0" /><circle cx="12" cy="12.500" r="2.300" fill="#111" /><circle cx="13" cy="11" r=".9" fill="#fff" />
            </svg>
          </div>
          <div className="flex w-[47px] items-center justify-center"><Icon n="lock" s="size-[31px]" /></div>
          <div className="flex items-center pl-[7px] pt-[1px]"><Fit w={41}>Item</Fit></div>
        </div>
        {[["Legend", 70], ["<scale bar>", 105], ["Map 0", 51]].map(([t, w], i) => (
          <div key={t} className="flex h-[24.300px] items-center">
            <div className="ml-[6px]"><Check on /></div>
            <div className="ml-[22px]"><Check /></div>
            <Fit w={w as number} className={`ml-[24px] pt-[3px] ${i === 0 ? "font-bold" : ""}`}>{t}</Fit>
          </div>
        ))}
      </div>
    </>
  );
}

function Group({ t, w, className, children }: { t: string; w: number; className: string; children: React.ReactNode }) {
  return (
    <div className={`ml-[18px] w-[584px] shrink-0 rounded-[3px] border-2 border-[#bebebe] ${className}`}>
      <div className="-ml-[3px] -mt-[14px] flex h-[26px] w-fit items-center bg-[#f0f0f0] pr-[10px] pt-[2px] text-[#3a3a3a]">
        <span className="ml-[4px] mr-[12px]"><Tri dir="down" c="#333" s="size-[17px]" /></span>
        <Fit w={w} className="pt-[2px] font-bold">{t}</Fit>
      </div>
      <div className="ml-[18px] w-[543px]">{children}</div>
    </div>
  );
}

function Field({ l, lw, v, vw, combo }: { l: string; lw: number; v?: string; vw?: number; combo?: boolean }) {
  return (
    <div className="mb-[9px] flex h-[34px] items-center">
      <div className="w-[140px] pt-[5px]"><Fit w={lw}>{l}</Fit></div>
      <div className={`flex h-[34px] flex-1 items-center rounded-[3px] border-2 border-[#b4b4b4] pl-[6px] ${combo ? "bg-linear-to-b from-[#f8f8f8] to-[#dadada]" : "bg-white"}`}>
        <span className="flex-1 pt-[4px]">{v && <Fit w={vw || 0}>{v}</Fit>}</span>
        {combo && <span className="flex h-full w-[24px] items-center justify-center border-l-2 border-[#b4b4b4] bg-linear-to-b from-white to-[#e2e2e2]"><Tri dir="down" s="size-[11px]" /></span>}
      </div>
    </div>
  );
}

const TREE: { t: string; e: number; k: string; c?: string }[] = [
  { t: "Grid", e: 2732, k: "box", c: "#cc66dc" },
  { t: "Count", e: 2759, k: "poly" },
  { t: "osm_railway_subwayentrance_32630", e: 3073, k: "dot", c: "#e8540a" },
  { t: "Regular points", e: 2840, k: "dot", c: "#66e066" },
  { t: "00_grid_500m_32630", e: 2910, k: "box", c: "#f9c391" },
  { t: "osm_railway_subwayentrance_3042", e: 3061, k: "dot", c: "#933a94" },
  { t: "1_medioambiente_ActuacionesLimpiezaUr...", e: 3130, k: "dot", c: "#9a3a6c" },
  { t: "1_CulturaOcio_Arbolado_Parques_Zonas_...", e: 3132, k: "dot", c: "#e8a838" },
  { t: "0_MedioAmbiente_FuentesAgua_4326", e: 3077, k: "dot", c: "#4278ae" },
  { t: "0_CulturaOcio_EdificiosMonumentales_4326", e: 3130, k: "dot", c: "#96604a" },
  { t: "0_deporte_piscinas_municipales_4326", e: 3077, k: "dot", c: "#b4dc86" },
  { t: "0_Educacion_ColegiosPublicos_4326", e: 3053, k: "dot", c: "#c0829c" },
  { t: "0_Transporte_CargaDescarga_4326", e: 3063, k: "pts" },
  { t: "140627_Ciclocarriles", e: 2899, k: "line", c: "#fde23e" },
  { t: "130111_Calles_Tranquilas", e: 2951, k: "line", c: "#7d36a8" },
];

function TreeRow({ r }: { r: (typeof TREE)[number] }) {
  const big = r.k === "poly" || r.k === "pts";
  return (
    <div className={`flex shrink-0 items-center ${big ? "h-[31px]" : "h-[24.500px]"}`}>
      <div className="ml-[8px] flex h-full w-[28px] shrink-0 items-center">
        {big ? (
          <div className="flex size-[13px] items-center justify-center border border-[#999] bg-white"><svg viewBox="0 0 9 9" className="size-[9px]"><path d="M4.500 1v7M1 4.500h7" stroke="#555" /></svg></div>
        ) : <div className="ml-[7px] h-full border-l-2 border-dotted border-[#aaa]" />}
        <div className="h-0 flex-1 border-t-2 border-dotted border-[#aaa]" /><div className="w-[4px]" />
      </div>
      <div className={`relative -top-[1px] flex shrink-0 items-center justify-center ${big ? "w-[30px]" : "w-[24px]"}`}>
        {r.k === "box" && <div className="h-[24px] w-[25px] border-2 border-[#3a2a3a]" style={{ backgroundColor: r.c }} />}
        {r.k === "dot" && <div className="size-[16px] rounded-full border-[1.500px] border-[#222]" style={{ backgroundColor: r.c }} />}
        {r.k === "line" && <div className="h-[2px] w-[25px]" style={{ backgroundColor: r.c }} />}
        {r.k === "poly" && <svg viewBox="0 0 30 22" className="h-[22px] w-[31px]"><path d="M2 3c6-3 9 3 14 1s8-2 12-1c2 5-1 8 0 13-5 2-9-4-14-1s-7 6-11 6c-3-6 0-12-1-18z" fill="#dcdcdc" stroke="#8b8b8b" strokeWidth="1.400" /></svg>}
        {r.k === "pts" && <svg viewBox="0 0 30 28" className="h-[28px] w-[30px]"><g fill="#b4b4b4" stroke="#888" strokeWidth=".8"><circle cx="7" cy="22" r="2.300" /><circle cx="11" cy="10" r="2.300" /><circle cx="24" cy="4" r="2.300" /></g></svg>}
      </div>
      <Fit w={r.e - (big ? 2700 : 2694)} className={`pt-[1px] font-bold ${big ? "ml-[9px]" : "ml-[10px]"}`}>{r.t}</Fit>
    </div>
  );
}

const BTN_ICONS: React.ReactNode[] = [
  <path d="M4 5h16l-8 14z" fill="#aaa" stroke="#777" />,
  <path d="M4 19h16L12 5z" fill="#aaa" stroke="#777" />,
  <g fill="#e4e4e4" stroke="#999"><path d="M3 8h9v12H3z" /><path d="M7 4h9v13H7z" /><path d="M13 4l4-2 1 10h-5z" /><rect x="14" y="14" width="8" height="7" /></g>,
  <path d="M9 3h6v6h6v6h-6v6H9v-6H3V9h6zM12 6v12M6 12h12" fill="#e2e2e2" stroke="#999" strokeWidth="1.500" />,
  <path d="M2.500 8.500h19v7h-19zM6 12h12" fill="#e4e4e4" stroke="#a0a0a0" strokeWidth="1.500" />,
  <g><path d="M4 2h16v19H4z" fill="#eee" stroke="#c0c0c0" /><path d="M7 17L14 3l3 2-7 13-3 2z" fill="#bdbdbd" stroke="#999" /></g>,
  <path d="M18 7V4H6l6.500 8L6 20h12v-3.500" fill="none" stroke="#777" strokeWidth="2.600" />,
  <g><path d="M3 5h18l-7 8v9h-4v-9z" fill="#5f94d0" stroke="#3c6ca6" /><rect x="3" y="2.500" width="18" height="4" fill="#fce94f" stroke="#c4a000" strokeWidth=".7" /></g>,
  <g fill="none" stroke="#999" strokeWidth="1.800"><path d="M12 4C7 1 3 5 7.500 8 1 10 5 17 12 13" /><path d="M13 15h9v7h-9zM15 15v-2h5v2" strokeWidth="1.200" fill="#ddd" /></g>,
];

function PropertiesDock() {
  return (
    <>
      <div className="flex h-[10px] shrink-0 items-center justify-center"><div className={`h-[6px] w-[212px] ${DOTS}`} /></div>
      <div className="flex h-[36px] shrink-0 items-end">
        <div className={`${TAB} ${OFF} ml-[1px] h-[31px] w-[154px] rounded-tl-[3px] border-b-2 border-l-2 border-t-2 pr-[3px]`}><Fit w={107}>Composition</Fit></div>
        <div className={`${TAB} h-[36px] w-[181px] rounded-t-[3px] border-x-2 border-t-2 bg-[#f0f0f0]`}><Fit w={136}>Item properties</Fit></div>
        <div className={`${TAB} ${OFF} h-[31px] w-[187px] rounded-tr-[3px] border-b-2 border-r-2 border-t-2`}><Fit w={144}>Atlas generation</Fit></div>
        <div className="flex-1 border-b-2 border-[#b6b6b6]" />
      </div>
      <DockTitle t="Item properties" w={133} h="h-[34px]" />
      <div className="flex h-[31px] shrink-0 items-center bg-[#c8c8c8] pl-[7px] pt-[3px] font-bold"><Fit w={73}>Legend</Fit></div>
      <div className="flex h-[944px] shrink-0 border-2 border-[#bebebe]">
        <div className="flex min-w-0 flex-1 flex-col">
          <Group t="Main properties" w={157} className="mt-[31px] h-[256px]">
            <div className="h-[17px]" />
            <Field l="Title" lw={39} v="Legend" vw={64} />
            <Field l="Title alignment" lw={130} v="Left" vw={34} combo />
            <Field l="Map" lw={38} v="Map 0" vw={55} combo />
            <Field l="Wrap text on" lw={114} />
            <div className="mt-[13px] flex items-center"><Check on /><Fit w={184} className="ml-[10px] pt-[3px]">Resize to fit contents</Fit></div>
          </Group>
          <Group t="Legend items" w={133} className="mt-[22px] h-[578px]">
            <div className="mt-[19px] flex h-[38px] items-center">
              <Check on blue />
              <Fit w={107} className="ml-[10px] pt-[2px]">Auto update</Fit>
              <div className="ml-auto flex h-[38px] w-[114px] items-center justify-center rounded-[4px] border-2 border-[#8f8f8f] bg-linear-to-b from-white to-[#ececec] text-[#858585]"><Fit w={88}>Update all</Fit></div>
            </div>
            <div className="mt-[9px] flex h-[384px] overflow-hidden rounded-[2px] border-2 border-[#b4b4b4] bg-white">
              <div className="flex flex-1 flex-col pt-[3px]">{TREE.map((r) => <TreeRow key={r.t} r={r} />)}</div>
              <VScroll thumb={130} />
            </div>
            <div className="mt-[10px] flex h-[44px] gap-[5.700px]">
              {BTN_ICONS.map((ic, i) => (
                <div key={i} className="flex h-[44px] w-[45px] shrink-0 items-center justify-center rounded-[4px] border-2 border-[#a4a4a4] bg-linear-to-b from-[#fafafa] to-[#e6e6e6]">
                  <svg viewBox="0 0 24 24" className="size-[32px] shrink-0">{ic}</svg>
                </div>
              ))}
              <div className="-ml-[5.700px] flex h-[44px] w-[23px] items-center justify-center rounded-[4px] border-2 border-[#a4a4a4] bg-linear-to-b from-[#fafafa] to-[#e6e6e6]"><Tri dir="down" c="#888" /></div>
            </div>
            <div className="mt-[14px] flex items-center"><Check /><Fit w={388} className="ml-[10px] pt-[1px]">Only show items inside current atlas feature</Fit></div>
          </Group>
          <div className="ml-[23px] mt-[13px] flex h-[24px] items-center text-[#3a3a3a]">
            <Tri dir="right" c="#333" s="size-[17px]" />
            <Fit w={55} className="ml-[11px] pt-[3px] font-bold">Fonts</Fit>
            <div className="ml-[10px] h-[2px] w-[486px] bg-[#9a9a9a]" />
          </div>
        </div>
        <VScroll thumb={435} />
        <div className="w-[2px]" />
      </div>
    </>
  );
}

/* ---------- task bar ---------- */
const Adobe = ({ t, c, bg }: { t: string; c: string; bg: string }) => (
  <g><rect x="2" y="2" width="20" height="20" fill={bg} stroke={c} strokeWidth="1.200" /><text x="12" y="16.300" textAnchor="middle" fontFamily="Open Sans" fontWeight="600" fontSize="12" fill={c}>{t}</text></g>
);
const TASKS: { n: string; on?: boolean; active?: boolean; g: React.ReactNode }[] = [
  { n: "start", g: <path d="M4 5.800l7-1V11.500H4zM12 4.700l8-1.200v8H12zM4 12.500h7v6.700l-7-1zM12 12.500h8v8l-8-1.200z" fill="#fff" /> },
  { n: "taskview", g: <path d="M5 4.500v3h9v-3M5 10h9v5.500H5zM5 20v-3h9v3M17.500 4v16M17.500 8.500v3" fill="none" stroke="#fff" strokeWidth="1.100" /> },
  { n: "teamviewer", g: <><rect width="24" height="24" fill="#0d7ad8" /><circle cx="12" cy="12" r="9.800" fill="#fff" /><path d="M3.500 12L9 7.500v3h6v-3l5.500 4.500-5.500 4.500v-3H9v3z" fill="#0d7ad8" /></> },
  { n: "whatsapp", g: <><path d="M1.500 22.500l1.600-5.500A10.500 10.500 0 1 1 7 21z" fill="#fff" /><path d="M3.600 20.500l1.200-4A8.900 8.900 0 1 1 8 19.400z" fill="#28c04a" /><path d="M8.500 7c-2 3 3.500 9.500 7.500 9 2-.8 1.500-2.500-.8-3.300-1 .3-1 1.200-2 .8-1.500-.7-2.500-2-3-3.500.8-.6 1-1 .3-2.600-.5-1-1.300-1-2-.4z" fill="#fff" /></> },
  { n: "explorer", on: true, g: <><path d="M1 2.500h8.500L11 5h12v15H1z" fill="#ffe08a" /><path d="M1 2.500h8v3H1z" fill="#f7c331" /><path d="M5 12h14v9h-3.500v-4.500h-7V21H5z" fill="#3bb4ea" /></> },
  { n: "terminal", g: <><rect x="1.500" y="4" width="21" height="15.500" fill="#3a3f42" stroke="#a8adb0" /><text x="4" y="11" fontFamily="Liberation Mono" fontSize="5" fill="#ddd">C:\_</text></> },
  { n: "rhino", g: <><path d="M1 0h22v24H5L1 10z" fill="#d5d5d5" /><path d="M1 9l8 9 2 6H1zM23 10l-5 6-3 8h8z" fill="#1a1a1a" /><path d="M8 1l5 4 7 1-2 6-5-3-2 4-5-6zM9 15l4 2 4-2-2 6-4 1z" fill="#333" /><path d="M10 6l5 7-2 1z" fill="#fff" /><circle cx="12" cy="14" r="1.100" fill="#e33" /></> },
  { n: "android", g: <><rect x="1" y="0" width="22" height="24" fill="#9a9a9a" /><path d="M4 0v7M8 0v4h2" stroke="#333" fill="none" strokeWidth="1.600" /><path d="M2 24c0-12 20-12 20 0z" fill="#88ab33" /><path d="M6 11l2.500 4.500M18 11l-2.500 4.500" stroke="#88ab33" strokeWidth="1.500" /><circle cx="8" cy="20" r="1.100" fill="#fff" /><circle cx="16" cy="20" r="1.100" fill="#fff" /></> },
  { n: "qgis", g: <Q /> },
  { n: "indesign", g: <Adobe t="Id" c="#e0439a" bg="#2e0a1f" /> },
  { n: "photoshop", g: <Adobe t="Ps" c="#6fb6f5" bg="#0b0b4a" /> },
  { n: "illustrator", on: true, g: <Adobe t="Ai" c="#f59a1e" bg="#2a1a0a" /> },
  { n: "rings", g: <><circle cx="12" cy="5" r="4" fill="#c9302c" stroke="#ddd" strokeWidth=".8" /><circle cx="12" cy="19" r="4" fill="#c9302c" stroke="#ddd" strokeWidth=".8" /><circle cx="7.500" cy="10" r="4.600" fill="#2a2a2a" stroke="#999" strokeWidth="1.300" /><circle cx="16.500" cy="14" r="4.600" fill="#2a2a2a" stroke="#999" strokeWidth="1.300" /><path d="M12 7c4-3 9 0 9 4M12 17c-4 3-9 0-9-4" fill="none" stroke="#8a8a8a" strokeWidth="1.600" /><path d="M8 13l8-2" stroke="#444" strokeWidth="3" /></> },
  { n: "blender", g: <><path d="M1 17l8-7H3V7.500h9L9 4l3-1 9 8c2 5-2 9.500-7.500 9.500S6.500 17 6.500 14l-3 4z" fill="#f5821f" /><circle cx="14" cy="13.500" r="4.600" fill="#fff" /><circle cx="14.200" cy="13.500" r="2.600" fill="#255a9b" /></> },
  { n: "atom", g: <><circle cx="12" cy="12" r="11.500" fill="#5cc08d" /><g fill="none" stroke="#e4f7ec" strokeWidth="1"><ellipse cx="12" cy="12" rx="3" ry="7.500" /><ellipse cx="12" cy="12" rx="3" ry="7.500" transform="rotate(60 12 12)" /><ellipse cx="12" cy="12" rx="3" ry="7.500" transform="rotate(120 12 12)" /></g></> },
  { n: "pen", g: <><path d="M2 23L18 3l4-2-3 8z" fill="#aaa" /><ellipse cx="13" cy="13" rx="5" ry="6.500" transform="rotate(30 13 13)" fill="#b5605c" /><path d="M5 18c4 3 12 3 14-2" stroke="#5c7a22" strokeWidth="1.500" fill="none" /></> },
  { n: "chrome", on: true, g: <><circle cx="12" cy="12" r="11" fill="#ffcd41" /><path d="M12 12L2.500 6.500A11 11 0 0 1 21.500 6.500z" fill="#de5145" /><path d="M12 12L2.500 6.500A11 11 0 0 0 11 23l5-8.500z" fill="#1aa15f" /><path d="M12 6.500h9.500A11 11 0 0 0 3 6l4.500 7z" fill="#de5145" /><circle cx="12" cy="12" r="5.200" fill="#fff" /><circle cx="12" cy="12" r="4.100" fill="#4a8af4" /></> },
  { n: "spotify", on: true, g: <><circle cx="12" cy="12" r="11" fill="#1ed760" /><path d="M5.500 8.500c4.500-1.400 9.500-1 13.500 1.300M6 12.200c4-1.100 8-.7 11.500 1.200M6.800 15.700c3.200-.8 6.300-.5 9 1" stroke="#121212" strokeWidth="1.900" strokeLinecap="round" fill="none" /></> },
  { n: "notes", on: true, g: <><path d="M3.500 4h17v16.500h-17z" fill="#fff" /><path d="M3.500 3h17v1.500h-17z" fill="#888" /><path d="M12 20.500v-8h8.500z" fill="#1e160e" /></> },
  { n: "qgis2", on: true, active: true, g: <Q /> },
];

function Taskbar() {
  return (
    <div className="flex h-[77px] bg-[#1e160e] text-white">
      <div className="-ml-[2px] flex shrink-0">
        {TASKS.map((t) => (
          <div key={t.n} className="flex h-full w-[95.350px] shrink-0 justify-center">
            <div className={`flex flex-col items-center justify-between ${t.active ? "w-[92px] bg-[#4d463f]" : "w-[79px]"}`}>
              <svg viewBox="0 0 24 24" className="mt-[15px] size-[45px]">{t.g}</svg>
              <div className={`h-[5px] w-full ${t.on ? "bg-[#76b9ed]" : ""}`} />
            </div>
          </div>
        ))}
      </div>
      <div className="flex flex-1 items-center pl-[2px] font-['Open_Sans','Noto_Sans',sans-serif]">
        <svg viewBox="0 0 24 24" className="ml-[440px] size-[32px]"><g fill="none" stroke="#fff" strokeWidth="1.600"><circle cx="16" cy="6" r="3.500" /><path d="M11.500 15c0-7 9-7 9.500-1" /><circle cx="8.500" cy="13" r="3" /><path d="M3.500 22c0-7.500 10-7.500 10 0" /></g></svg>
        <svg viewBox="0 0 24 24" className="ml-[40px] size-[28px]"><path d="M3 17l9-10 9 10" fill="none" stroke="#fff" strokeWidth="2" /></svg>
        <svg viewBox="0 0 30 20" className="ml-[17px] h-[20px] w-[30px]"><path d="M1.500 4h25v12h-25z" fill="none" stroke="#fff" strokeWidth="2" /><path d="M4 6.500h5v7H4z" fill="#fff" /><path d="M28.500 8v4" stroke="#fff" strokeWidth="2" /></svg>
        <svg viewBox="0 0 32 28" className="ml-[15px] mt-[3px] h-[30px] w-[33px]"><path d="M5 19a6 6 0 0 1 2-11c3-8 15-7 16 1 7 1 7 10 1 11z" fill="#fff" /><circle cx="20" cy="18" r="7.500" fill="#3271c5" stroke="#fff" /><path d="M16.500 18a3.500 3.500 0 0 1 6-2.500M23.500 18a3.500 3.500 0 0 1-6 2.500" stroke="#fff" strokeWidth="1.500" fill="none" /></svg>
        <svg viewBox="0 0 24 24" className="ml-[16px] size-[27px]"><g fill="none" stroke="#fff" strokeWidth="1.500"><path d="M2 22C2 10 10 2 22 2" opacity=".6" /><path d="M7 22C7 13 13 7 22 7" /><path d="M12 22c0-6 4-10 10-10" /><path d="M17 22c0-3 2-5 5-5" /></g></svg>
        <svg viewBox="0 0 28 24" className="ml-[16px] h-[27px] w-[32px]"><g fill="none" stroke="#fff" strokeWidth="1.600"><path d="M2 8.500h4l5-4.500v16l-5-4.500H2z" /><path d="M14.500 9c1.500 2 1.500 4 0 6M18 6.500c3 3.500 3 7.500 0 11" /><path d="M21.500 4c4.500 5 4.500 11 0 16" opacity=".6" /></g></svg>
        <Fit w={41} className="ml-[20px] pt-[2px] text-[21px]">CAT</Fit>
        <div className="ml-[27px] flex flex-col items-center text-[21px] leading-[36px]">
          <Fit w={53}>11:09</Fit>
          <Fit w={118} className="-mt-[1px]">05/07/2018</Fit>
        </div>
        <svg viewBox="0 0 46 50" className="ml-[33px] h-[50px] w-[46px]">
          <path d="M1 6h30v26H16l-6 7v-7H1z" fill="#fff" /><path d="M6 12h20M6 18h20M6 24h14" stroke="#1e160e" strokeWidth="2" />
          <circle cx="31" cy="34" r="14" fill="#2d2a28" stroke="#888" strokeWidth="1.500" />
          <text x="31" y="41" textAnchor="middle" fontSize="20" fontWeight="bold" fill="#fff">3</text>
        </svg>
        <div className="ml-auto mr-[8px] h-full w-px bg-[#777]" />
      </div>
    </div>
  );
}

const MENU: [string, number, string][] = [
  ["Composer", 90, "ml-[15px]"], ["Edit", 34, "ml-[22px]"], ["View", 43, "ml-[22px]"], ["Layout", 58, "ml-[23px]"], ["Atlas", 45, "ml-[22px]"], ["Settings", 73, "ml-[21px]"],
];

export default function App() {
  return (
    <div className="relative h-[2480px] w-[3508px] overflow-hidden bg-white pl-[278px] pt-[104px] text-black shadow-[inset_0_0_0_2px_#2d3e56]">
      <h1 className="flex h-[138px] w-[807px] items-center bg-[#00ffff] pl-[42px] font-['Open_Sans','Noto_Sans',sans-serif] text-[98px] font-bold italic leading-[138px] text-[#2d3e56]">
        <Fit w={706} className="-mt-[6px]">Añadir leyenda</Fit>
      </h1>

      <div className={`mt-[168px] flex h-[1661px] w-[2953px] flex-col bg-[#f0f0f0] text-[17.500px] leading-[22px] ${UI}`}>
        <div className="flex h-[46px] shrink-0 items-center bg-white">
          <svg viewBox="0 0 24 24" className="ml-[4px] mt-[2px] size-[30px]"><Q /></svg>
          <Fit w={58} className="ml-[8px] font-['Open_Sans','Noto_Sans',sans-serif] text-[20px]">print1</Fit>
          <svg viewBox="0 0 22 22" className="ml-auto size-[22px]"><path d="M1 11h20" stroke="#000" strokeWidth="1.600" /></svg>
          <svg viewBox="0 0 22 22" className="ml-[67px] size-[22px]"><path d="M3 7h12v12H3zM7 7V3h12v12h-4" fill="none" stroke="#000" strokeWidth="1.600" /></svg>
          <svg viewBox="0 0 22 22" className="ml-[68px] mr-[39px] size-[22px]"><path d="M2 2l18 18M20 2L2 20" stroke="#000" strokeWidth="1.600" /></svg>
        </div>
        <div className="flex h-[39px] shrink-0 items-center border-b-2 border-[#b6b6b6] pt-[2px]">
          {MENU.map(([t, w, m]) => <Fit key={t} w={w} className={m}>{t}</Fit>)}
        </div>
        <Toolbar />
        <div className="flex h-[1397px] shrink-0 border-b-2 border-[#bcbcbc]">
          <ToolColumn />
          <div className="ml-[3px] flex w-[2233px] shrink-0 flex-col border-r-2 border-[#b8b8b8] shadow-[inset_1px_1px_0_#c4c4c4]">
            <HRuler />
            <div className="flex h-[1362px]">
              <VRuler />
              <Canvas />
              <VScroll thumb={592} />
            </div>
          </div>
          <div className="flex w-[8px] shrink-0 items-center">
            <div className={`h-[380px] w-[8px] ${DOTS}`} />
          </div>
          <div className="flex w-[649px] flex-col">
            <ItemsDock />
            <PropertiesDock />
          </div>
        </div>
        <div className="flex h-[42px] shrink-0 items-center pt-[4px]">
          <Fit w={124} className="ml-[2px]">x: 342.34 mm</Fit>
          <Fit w={135} className="ml-[39px]">y: 133.178 mm</Fit>
          <Fit w={68} className="ml-[29px]">page: 1</Fit>
          <div className="ml-[96px] flex h-[34px] w-[153px] items-center rounded-[3px] border-2 border-b-[3px] border-[#b4b4b4] bg-white pl-[4px]">
            <span className="flex-1"><Fit w={60}>76.6%</Fit></span>
            <span className="flex h-full w-[23px] items-center justify-center border-l-2 border-[#b4b4b4]"><Tri dir="down" /></span>
          </div>
          <Fit w={134} className="ml-[10px]">1 item selected</Fit>
        </div>
        <Taskbar />
      </div>

      {/* annotations */}
      <div className="pointer-events-none absolute inset-0 font-['Open_Sans','Noto_Sans',sans-serif] text-[49px] font-bold italic leading-[60px] text-[#2d3e56]">
        <div className="absolute left-[2237px] top-[291px]"><Fit w={253}>des-clickar</Fit></div>
        <svg className="absolute left-[2530px] top-[320px] h-[990px] w-[180px]" viewBox="2530 320 180 990">
          <path d="M2533 322H2688V1282L2703 1267V1286L2681.500 1306 2660 1286V1267L2675 1282V335H2533z" fill="#2d3e56" />
        </svg>
        <div className="absolute left-[2575px] top-[1324px] h-[83px] w-[427px] border-8 border-[#2d3e56]" />
        <div className="absolute left-[2807px] top-[1777px] h-[82px] w-[75px] border-8 border-[#2d3e56]" />
        <div className="absolute left-[3186px] top-[1619px] flex flex-col">
          <Fit w={142}>quitar</Fit>
          <Fit w={231}>capas que</Fit>
          <Fit w={294}>no hay sobre</Fit>
          <Fit w={184}>el mapa</Fit>
        </div>
      </div>
    </div>
  );
}
